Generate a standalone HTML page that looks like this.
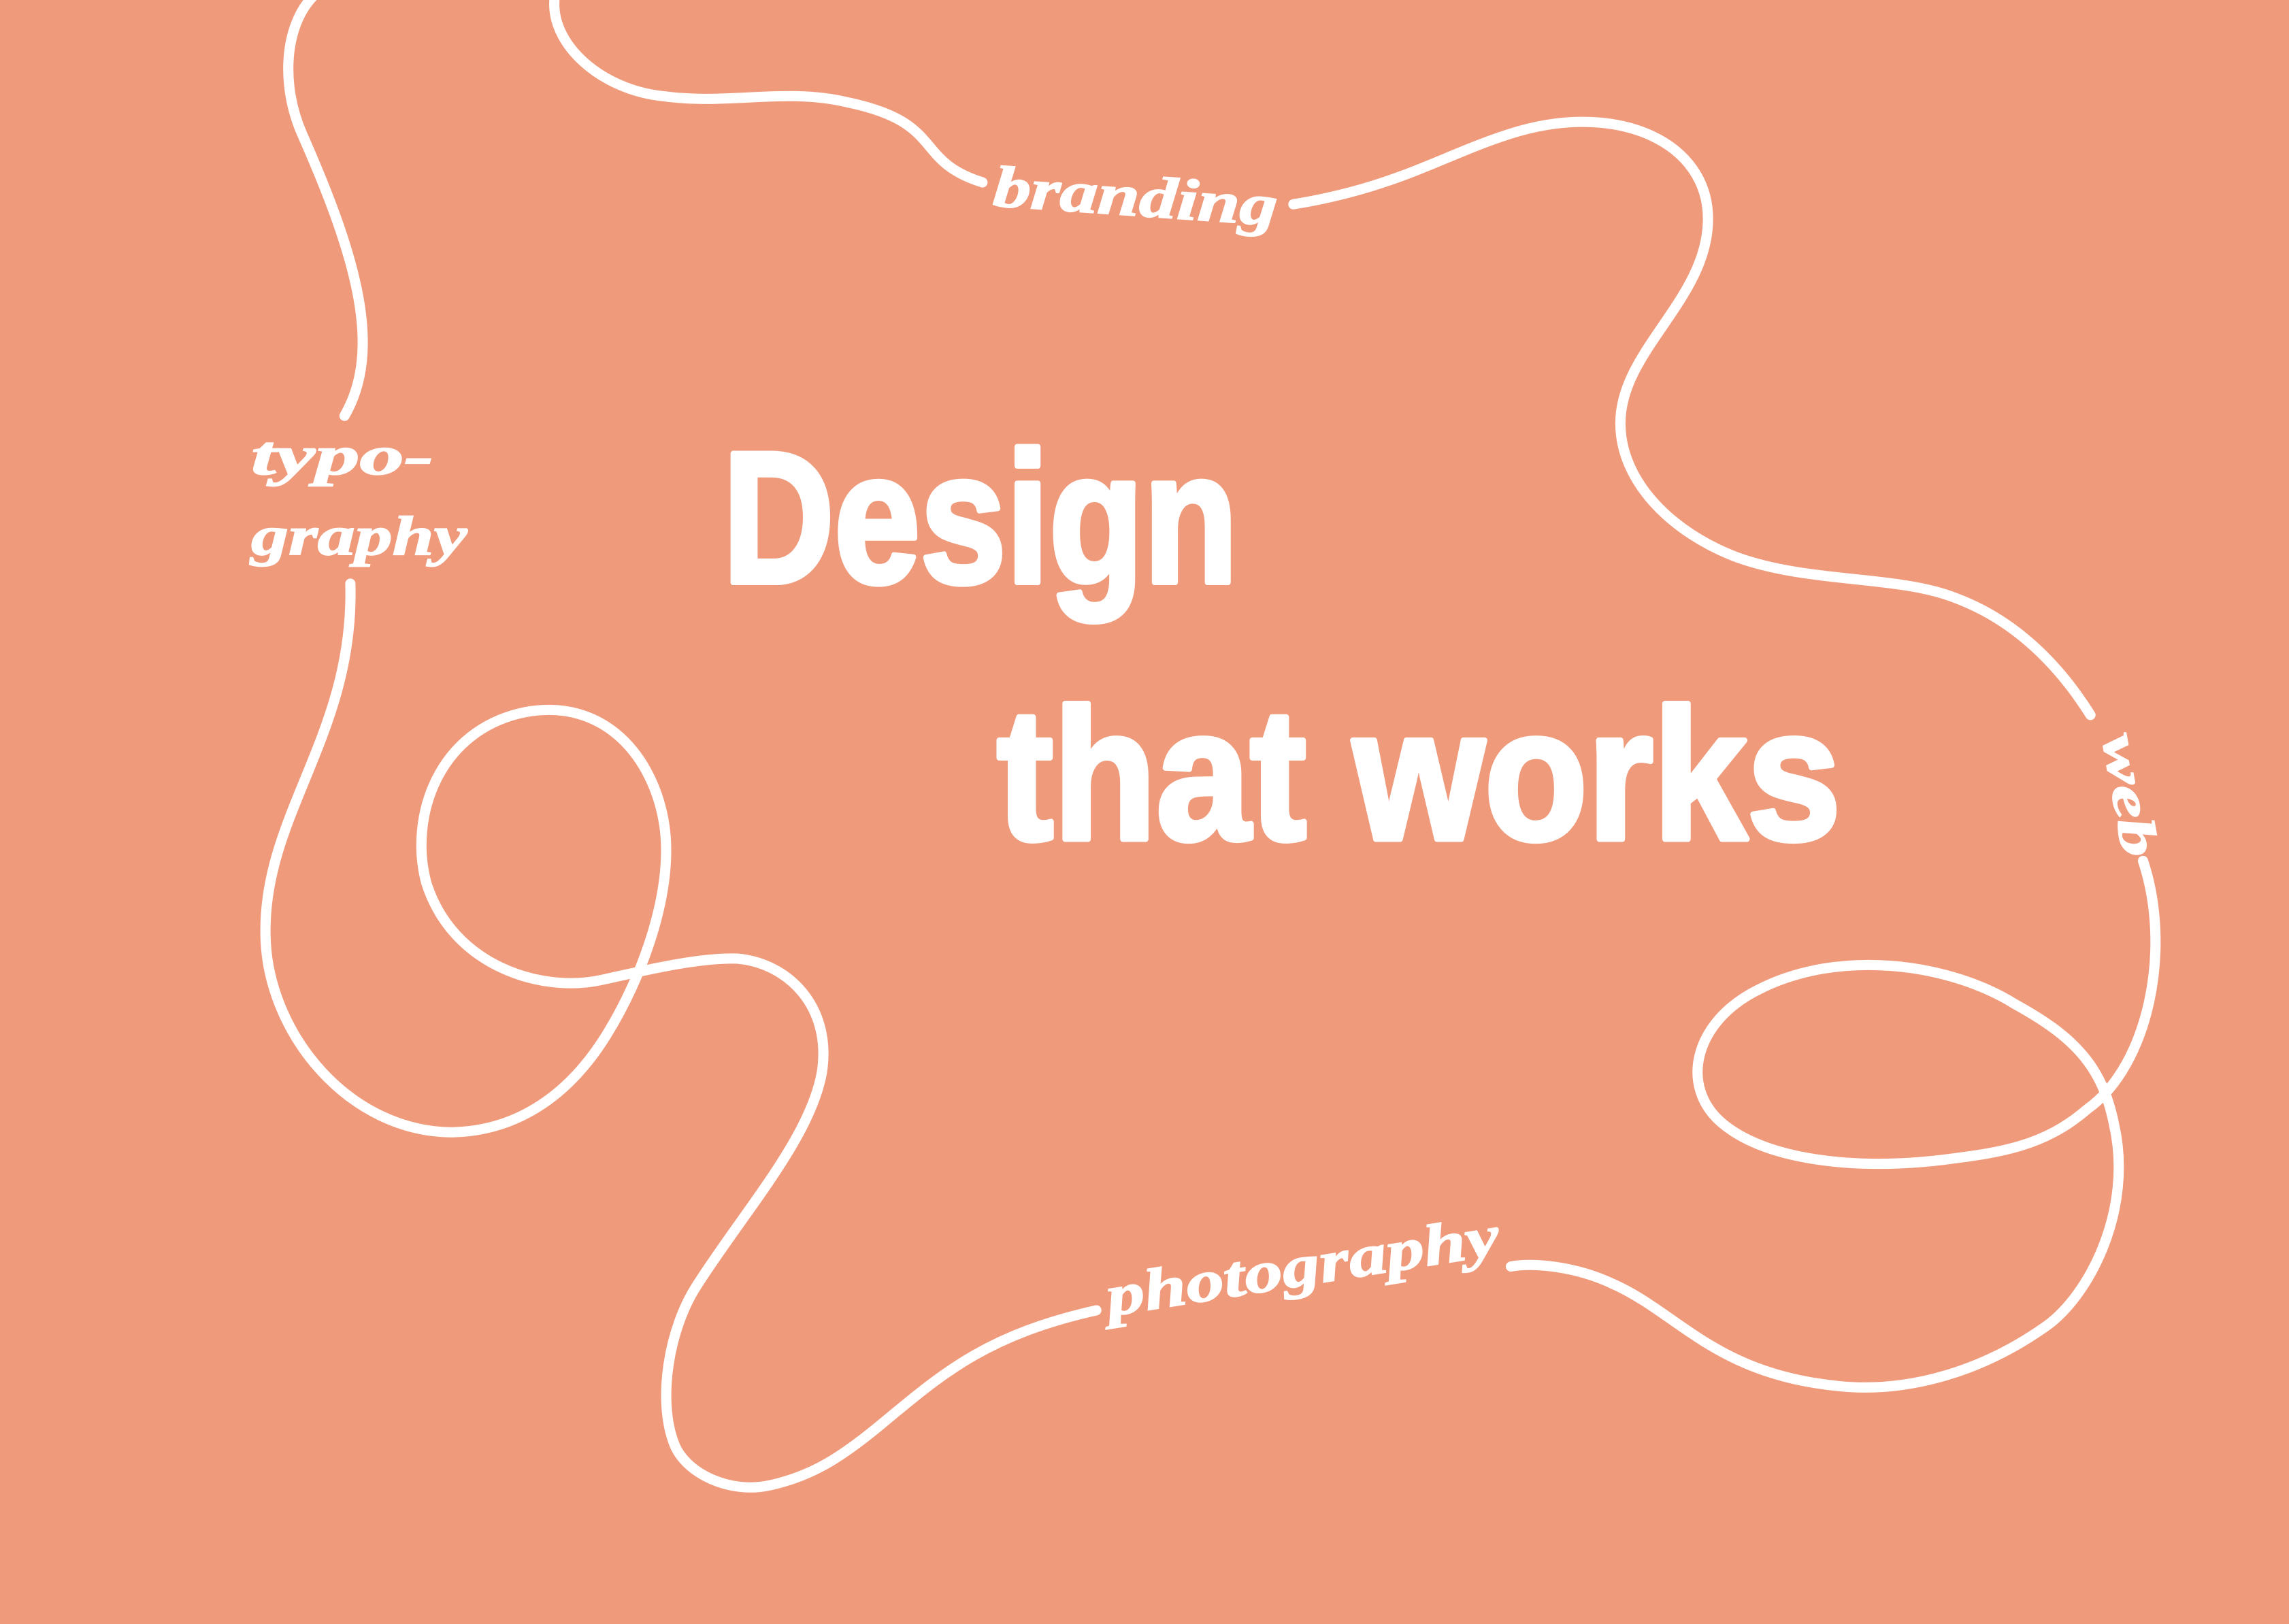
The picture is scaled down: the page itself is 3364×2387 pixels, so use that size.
<!DOCTYPE html>
<html><head><meta charset="utf-8"><style>
html,body{margin:0;padding:0;background:#F09A7C;}
svg{display:block;}
</style></head><body>
<svg width="3364" height="2387" viewBox="0 0 1568 1113" preserveAspectRatio="none" xmlns="http://www.w3.org/2000/svg">
<rect width="1568" height="1113" fill="#F09A7C"/>
<g fill="none" stroke="#fff" stroke-width="7" stroke-linecap="round" stroke-linejoin="round">
<path d="M214,-2 C195,18 192,58 207,92 C245,178 262,240 236,285"/>
<path d="M380,-2 C376,30 412,62 455,66 C500,72 538,60 580,70 C648,84 625,110 673,125"/>
<path d="M886,140 C960,128 992,104 1040,90 C1110,70 1170,98 1170,150 C1170,205 1110,240 1110,290 C1110,330 1145,365 1190,382 C1240,400 1300,394 1340,410 C1380,425 1410,455 1432,490"/>
<path d="M1468,590 C1488,650 1472,730 1430,760 C1400,786 1370,790 1330,795 C1270,802 1210,795 1180,770 C1150,745 1160,700 1205,678 C1260,650 1335,660 1380,688 C1420,710 1440,730 1448,770 C1462,830 1430,890 1400,910 C1360,938 1310,955 1260,950 C1175,942 1150,900 1105,880 C1080,868 1050,865 1035,868"/>
<path d="M751,898 C675,915 645,942 605,975 C575,1000 555,1012 527,1018 C500,1024 470,1010 462,990 C450,960 458,910 478,880 C510,830 555,780 563,735 C570,690 540,660 505,657 C475,656 430,668 410,672 C370,680 310,662 292,605 C280,560 300,500 360,488 C415,478 448,520 455,565 C462,610 440,670 415,710 C390,750 355,775 310,776 C240,776 185,710 182,645 C178,560 243,505 240,400"/>
</g>
<g fill="#fff" stroke="#fff" stroke-width="4" stroke-linejoin="round" font-family="'Liberation Sans Narrow','Liberation Sans',sans-serif" font-weight="bold">
<text x="495" y="399" font-size="128" textLength="353" lengthAdjust="spacingAndGlyphs">Design</text>
<text x="683" y="575" font-size="128" textLength="578" lengthAdjust="spacingAndGlyphs">that works</text>
</g>
<g fill="#fff" stroke="#fff" stroke-width="0.8" font-family="'Liberation Serif',serif" font-style="italic" font-weight="bold">
<text x="680" y="148" font-size="40" transform="rotate(4 780 140)" textLength="195" lengthAdjust="spacingAndGlyphs">branding</text>
<text x="172" y="325" font-size="38" textLength="125" lengthAdjust="spacingAndGlyphs">typo-</text>
<text x="172" y="380" font-size="38" textLength="148" lengthAdjust="spacingAndGlyphs">graphy</text>
<text x="1440" y="505" font-size="36" transform="rotate(80 1440 505)" textLength="85" lengthAdjust="spacingAndGlyphs">web</text>
<text x="760" y="902" font-size="40" transform="rotate(-9 760 902)" textLength="272" lengthAdjust="spacingAndGlyphs">photography</text>
</g>
</svg>
</body></html>
